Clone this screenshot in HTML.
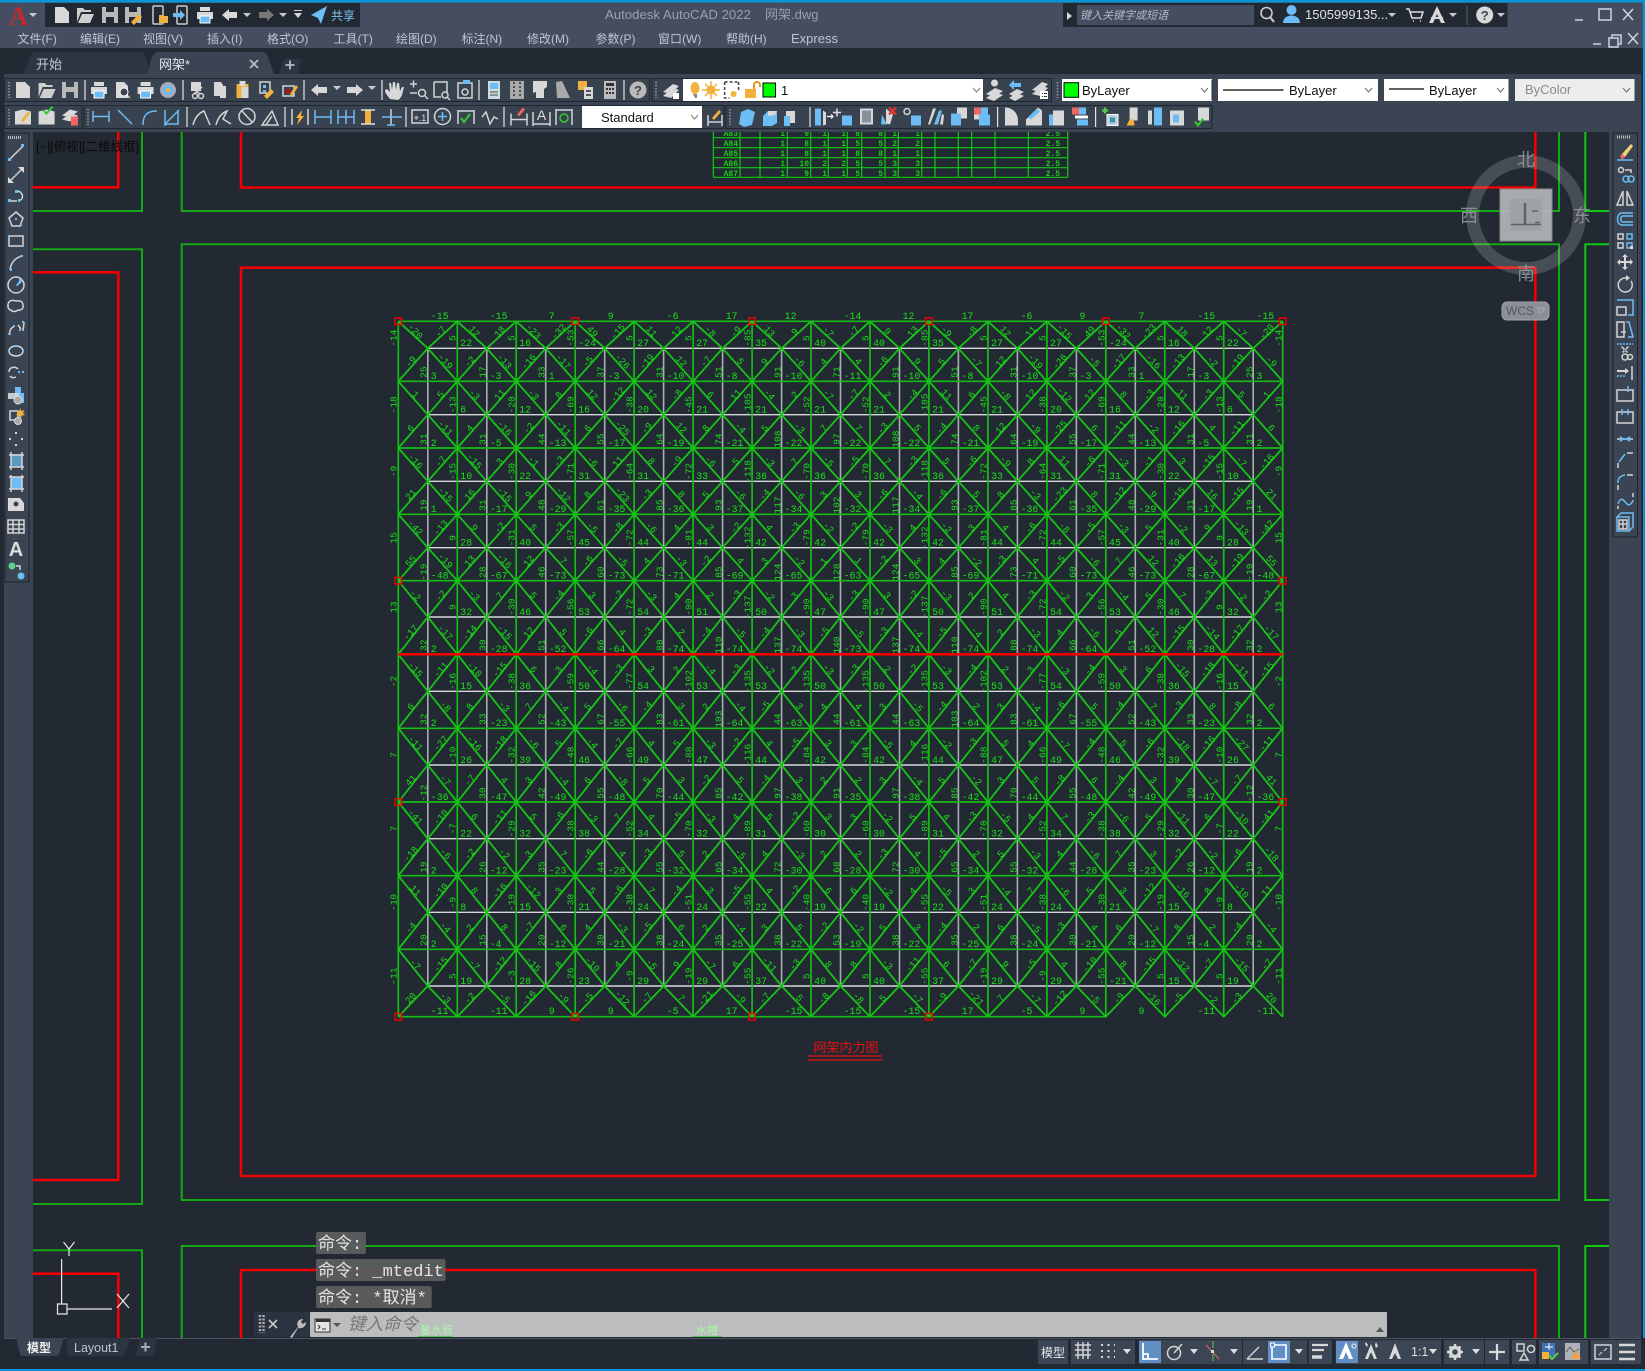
<!DOCTYPE html>
<html lang="zh"><head><meta charset="utf-8"><title>Autodesk AutoCAD 2022 网架.dwg</title>
<style>
html,body{margin:0;padding:0;width:1645px;height:1371px;overflow:hidden;background:#222932}
svg{display:block;font-family:"Liberation Sans","Noto Sans CJK SC",sans-serif}
.m text{font-size:12px;fill:#bfc5cf}
.l text{font:9.5px "Liberation Mono",monospace;fill:#1ae01a;text-anchor:middle;dominant-baseline:central;transform-box:fill-box;transform-origin:center}
.n text:nth-child(odd),.u text:nth-child(even){transform:translate(2px,-3px) rotate(48deg)}
.n text:nth-child(even),.u text:nth-child(odd){transform:translate(-2px,-3px) rotate(-48deg)}
.v text{transform:rotate(-90deg)}
.h text{font:9.83px "Liberation Mono",monospace;fill:#1ae01a;white-space:pre}
.t text{font:bold 8px "Liberation Mono",monospace;fill:#16d016;text-anchor:end}
.s{fill:none;stroke:#d4d4d4;stroke-width:1.5}
.b{fill:none;stroke:#6cbcf5;stroke-width:1.5}
.f{fill:#d8d8d8}
.fb{fill:#6cbcf5}
.o{fill:#f2b13c}
.g{fill:#3c4553}
</style></head><body>
<svg width="1645" height="1371" viewBox="0 0 1645 1371" xmlns="http://www.w3.org/2000/svg">
<defs>
<path id="z" vector-effect="non-scaling-stroke" fill="none" stroke="#16c416" stroke-width="1.8" d="M0 0l29.48 1 29.48-1 29.48 1 29.48-1 29.48 1 29.48-1 29.48 1 29.48-1 29.48 1 29.48-1 29.48 1 29.48-1 29.48 1 29.48-1 29.48 1 29.48-1 29.48 1 29.48-1 29.48 1 29.48-1 29.48 1 29.48-1 29.48 1 29.48-1 29.48 1 29.48-1 29.48 1 29.48-1 29.48 1 29.48-1"/>
<path id="doc" class="f" d="M-7-8h9l5 5v11H-7z"/>
<path id="op" fill="#cfcfcf" d="M-8 7V-7h6l2 2h6v2H-4zM-3-1H9L5 8H-7z"/>
<path id="sv" fill="#b9b9b9" fill-rule="evenodd" d="M-8-8H8V8H-8zM-4-8v5h8v-5zM-4 2v6h8V2z"/>
<g id="pr"><path class="f" d="M-5-8H5v4H-5zM-8-3H8V4H-8z"/><path class="fb" stroke="#fff" d="M-5 1H5v7H-5z"/></g>
<path id="tr" fill="#c8ccd2" d="M-4-2H4L0 2z"/>
</defs>

<!-- canvas -->
<rect width="1645" height="1371" fill="#222932"/>
<g fill="none" stroke="#14a814" stroke-width="2">
<path d="M30 211H142V100M30 249.3H142V1204H30M30 1250.3H142V1340"/>
<path d="M181.7 100V211H1559V100M181.7 1340V1246H1559V1340"/>
<path d="M181.7 1200V244.3H1559V1200z"/>
<path stroke="#10c810" d="M1585.3 100V211H1612M1612 244.3H1585.3V1200H1612M1612 1246H1585.3V1340"/>
</g>
<g fill="none" stroke="#f00000" stroke-width="2.6">
<path d="M30 187.3H118.3V100M30 272.3H118.3V1180H30M30 1273.7H118.3V1340"/>
<path d="M241 100V187.5H1535.3V100M241 267.7H1535.3V1176H241zM241 1340V1270H1535.3V1340"/>
</g>

<!-- table -->
<path fill="none" stroke="#13c813" stroke-width="1.2" d="M713.3 127.7H1067.7M713.3 137.7H1067.7M713.3 147.7H1067.7M713.3 157.7H1067.7M713.3 167.7H1067.7M713.3 177.3H1067.7M713.3 127V177.3M740 127V177.3M760 127V177.3M787.3 127V177.3M810.7 127V177.3M828.3 127V177.3M847.3 127V177.3M861.7 127V177.3M885 127V177.3M898.3 127V177.3M921.7 127V177.3M935 127V177.3M958.3 127V177.3M971.7 127V177.3M995 127V177.3M1028.3 127V177.3M1067.7 127V177.3"/>
<g class="t">
<text x="738" y="136">A83</text><text x="785" y="136">1</text><text x="809" y="136">9</text><text x="827" y="136">1</text><text x="846" y="136">1</text><text x="860" y="136">8</text><text x="883" y="136">8</text><text x="897" y="136">1</text><text x="920" y="136">1</text><text x="1060" y="136">2.5</text>
<text x="738" y="146">A84</text><text x="785" y="146">1</text><text x="809" y="146">8</text><text x="827" y="146">1</text><text x="846" y="146">1</text><text x="860" y="146">5</text><text x="883" y="146">5</text><text x="897" y="146">2</text><text x="920" y="146">2</text><text x="1060" y="146">2.5</text>
<text x="738" y="156">A85</text><text x="785" y="156">1</text><text x="809" y="156">8</text><text x="827" y="156">1</text><text x="846" y="156">1</text><text x="860" y="156">8</text><text x="883" y="156">8</text><text x="897" y="156">1</text><text x="920" y="156">1</text><text x="1060" y="156">2.5</text>
<text x="738" y="166">A86</text><text x="785" y="166">1</text><text x="809" y="166">10</text><text x="827" y="166">2</text><text x="846" y="166">2</text><text x="860" y="166">5</text><text x="883" y="166">5</text><text x="897" y="166">3</text><text x="920" y="166">3</text><text x="1060" y="166">2.5</text>
<text x="738" y="176">A87</text><text x="785" y="176">1</text><text x="809" y="176">9</text><text x="827" y="176">1</text><text x="846" y="176">1</text><text x="860" y="176">5</text><text x="883" y="176">5</text><text x="897" y="176">3</text><text x="920" y="176">3</text><text x="1060" y="176">2.5</text>
</g>

<!-- truss: white members -->
<path fill="none" stroke="#a9adb2" stroke-width="1.6" d="M427.8 348.3V986M486.8 348.3V986M545.7 348.3V986M604.7 348.3V986M663.6 348.3V986M722.6 348.3V986M781.6 348.3V986M840.5 348.3V986M899.5 348.3V986M958.4 348.3V986M1017.4 348.3V986M1076.4 348.3V986M1135.3 348.3V986M1194.3 348.3V986M1253.2 348.3V986"/>
<path fill="none" stroke="#d6d8da" stroke-width="1.4" d="M427.8 348.3H1253.2M427.8 414.7H1253.2M427.8 481.3H1253.2M427.8 547.7H1253.2M427.8 617H1253.2M427.8 691.3H1253.2M427.8 765H1253.2M427.8 838.7H1253.2M427.8 912.3H1253.2M427.8 986H1253.2"/>
<!-- truss: green members -->
<path fill="none" stroke="#14bc14" stroke-width="1.7" d="M398.3 321.3V1016.7M457.3 321.3V1016.7M516.2 321.3V1016.7M575.2 321.3V1016.7M634.1 321.3V1016.7M693.1 321.3V1016.7M752.1 321.3V1016.7M811 321.3V1016.7M870 321.3V1016.7M928.9 321.3V1016.7M987.9 321.3V1016.7M1046.9 321.3V1016.7M1105.8 321.3V1016.7M1164.8 321.3V1016.7M1223.7 321.3V1016.7M1282.7 321.3V1016.7M398.3 321.3H1282.7M398.3 381.3H1282.7M398.3 448H1282.7M398.3 514.3H1282.7M398.3 580.7H1282.7M398.3 728.3H1282.7M398.3 802H1282.7M398.3 875.7H1282.7M398.3 949.3H1282.7M398.3 1016.7H1105.8"/>
<use href="#z" transform="matrix(1 0 0 27 398.3 321.3)"/><use href="#z" transform="matrix(1 0 0 -33 398.3 381.3)"/>
<use href="#z" transform="matrix(1 0 0 33.4 398.3 381.3)"/><use href="#z" transform="matrix(1 0 0 -33.3 398.3 448)"/>
<use href="#z" transform="matrix(1 0 0 33.3 398.3 448)"/><use href="#z" transform="matrix(1 0 0 -33 398.3 514.3)"/>
<use href="#z" transform="matrix(1 0 0 33.4 398.3 514.3)"/><use href="#z" transform="matrix(1 0 0 -33 398.3 580.7)"/>
<use href="#z" transform="matrix(1 0 0 36.3 398.3 580.7)"/><use href="#z" transform="matrix(1 0 0 -37.3 398.3 654.3)"/>
<use href="#z" transform="matrix(1 0 0 37 398.3 654.3)"/><use href="#z" transform="matrix(1 0 0 -37 398.3 728.3)"/>
<use href="#z" transform="matrix(1 0 0 36.7 398.3 728.3)"/><use href="#z" transform="matrix(1 0 0 -37 398.3 802)"/>
<use href="#z" transform="matrix(1 0 0 36.7 398.3 802)"/><use href="#z" transform="matrix(1 0 0 -37 398.3 875.7)"/>
<use href="#z" transform="matrix(1 0 0 36.6 398.3 875.7)"/><use href="#z" transform="matrix(1 0 0 -37 398.3 949.3)"/>
<use href="#z" transform="matrix(1 0 0 36.7 398.3 949.3)"/><use href="#z" transform="matrix(1 0 0 -30.7 398.3 1016.7)"/>
<path stroke="#f00000" stroke-width="2.6" d="M398.3 654.3H1282.7"/>
<g fill="none" stroke="#f00000" stroke-width="1.4"><path d="M395 318h6.6v6.6H395zM571.9 318h6.6v6.6h-6.6zM748.8 318h6.6v6.6h-6.6zM925.6 318h6.6v6.6h-6.6zM1102.5 318h6.6v6.6h-6.6zM1279.4 318h6.6v6.6h-6.6zM395 577.4h6.6v6.6H395zM1279.4 577.4h6.6v6.6h-6.6zM395 798.7h6.6v6.6H395zM1279.4 798.7h6.6v6.6h-6.6zM395 1013.4h6.6v6.6H395zM571.9 1013.4h6.6v6.6h-6.6zM748.8 1013.4h6.6v6.6h-6.6zM925.6 1013.4h6.6v6.6h-6.6z"/></g>

<!-- horizontal member forces -->
<g class="h">
<text x="430.8" y="319">-15       -15       7         9         -6        17        12        -14       12        17        -6        9         7         -15       -15</text>
<text x="460.3" y="346">22        16        -24       27        27        35        40        40        35        27        27        -24       16        22</text>
<text x="430.8" y="379">3         -3        1         -3        -10       -8        -10       -11       -10       -8        -10       -3        1         -3        3</text>
<text x="460.3" y="412.5">6         12        16        20        21        21        21        21        21        21        20        16        12        6</text>
<text x="430.8" y="446">2         -5        -13       -17       -19       -21       -22       -22       -22       -21       -19       -17       -13       -5        2</text>
<text x="460.3" y="479">10        22        31        31        33        36        36        36        36        33        31        31        22        10</text>
<text x="430.8" y="512">1         -17       -29       -35       -36       -37       -34       -32       -34       -37       -36       -35       -29       -17       1</text>
<text x="460.3" y="545.5">28        40        45        44        44        42        42        42        42        44        44        45        40        28</text>
<text x="430.8" y="578.5">-48       -67       -73       -73       -71       -69       -65       -63       -65       -69       -71       -73       -73       -67       -48</text>
<text x="460.3" y="615">32        46        53        54        51        50        47        47        50        51        54        53        46        32</text>
<text x="430.8" y="652">2         -28       -52       -64       -74       -74       -74       -73       -74       -74       -74       -64       -52       -28       2</text>
<text x="460.3" y="689">15        36        50        54        53        53        50        50        53        53        54        50        36        15</text>
<text x="430.8" y="726">2         -23       -43       -55       -61       -64       -63       -61       -63       -64       -61       -55       -43       -23       2</text>
<text x="460.3" y="763">26        39        46        49        47        44        42        42        44        47        49        46        39        26</text>
<text x="430.8" y="800">-36       -47       -49       -48       -44       -42       -38       -35       -38       -42       -44       -48       -49       -47       -36</text>
<text x="460.3" y="836.5">22        32        38        34        32        31        30        30        31        32        34        38        32        22</text>
<text x="430.8" y="873.5">2         -12       -23       -28       -32       -34       -30       -28       -30       -34       -32       -28       -23       -12       2</text>
<text x="460.3" y="910">8         15        21        24        24        22        19        19        22        24        24        21        15        8</text>
<text x="430.8" y="947">2         -4        -12       -21       -24       -25       -22       -19       -22       -25       -24       -21       -12       -4        2</text>
<text x="460.3" y="984">19        28        23        29        29        37        40        40        37        29        29        -21       15        19</text>
<text x="430.8" y="1014">-11       -11       9         9         -5        17        -15       -15       -15       17        -5        9         9         -11       -11</text>
</g>

<!-- vertical member forces -->
<g class="l v">
<g transform="translate(0,338)"><text x=394>-14</text><text x=453>5</text><text x=512>5</text><text x=571>-53</text><text x=630>5</text><text x=689>5</text><text x=748>-85</text><text x=807>5</text><text x=866>5</text><text x=925>-85</text><text x=984>5</text><text x=1043>5</text><text x=1102>-53</text><text x=1161>5</text><text x=1220>5</text><text x=1279>-14</text></g>
<g transform="translate(0,404.7)"><text x=394>-18</text><text x=453>-13</text><text x=512>-20</text><text x=571>-69</text><text x=630>-38</text><text x=689>-45</text><text x=748>-105</text><text x=807>-52</text><text x=866>-52</text><text x=925>-105</text><text x=984>-45</text><text x=1043>-38</text><text x=1102>-69</text><text x=1161>-20</text><text x=1220>-13</text><text x=1279>-18</text></g>
<g transform="translate(0,471.3)"><text x=394>-9</text><text x=453>-15</text><text x=512>-30</text><text x=571>-71</text><text x=630>-64</text><text x=689>-72</text><text x=748>-118</text><text x=807>-70</text><text x=866>-70</text><text x=925>-118</text><text x=984>-72</text><text x=1043>-64</text><text x=1102>-71</text><text x=1161>-30</text><text x=1220>-15</text><text x=1279>-9</text></g>
<g transform="translate(0,537.7)"><text x=394>15</text><text x=453>9</text><text x=512>-31</text><text x=571>-57</text><text x=630>-72</text><text x=689>-81</text><text x=748>-132</text><text x=807>-79</text><text x=866>-79</text><text x=925>-132</text><text x=984>-81</text><text x=1043>-72</text><text x=1102>-57</text><text x=1161>-31</text><text x=1220>9</text><text x=1279>15</text></g>
<g transform="translate(0,607)"><text x=394>13</text><text x=453>9</text><text x=512>-30</text><text x=571>-56</text><text x=630>-72</text><text x=689>-90</text><text x=748>-137</text><text x=807>-90</text><text x=866>-90</text><text x=925>-137</text><text x=984>-90</text><text x=1043>-72</text><text x=1102>-56</text><text x=1161>-30</text><text x=1220>9</text><text x=1279>13</text></g>
<g transform="translate(0,681.3)"><text x=394>-2</text><text x=453>-16</text><text x=512>-38</text><text x=571>-59</text><text x=630>-77</text><text x=689>-102</text><text x=748>-135</text><text x=807>-135</text><text x=866>-135</text><text x=925>-135</text><text x=984>-102</text><text x=1043>-77</text><text x=1102>-59</text><text x=1161>-38</text><text x=1220>-16</text><text x=1279>-2</text></g>
<g transform="translate(0,755)"><text x=394>7</text><text x=453>-10</text><text x=512>-32</text><text x=571>-48</text><text x=630>-66</text><text x=689>-88</text><text x=748>-116</text><text x=807>-84</text><text x=866>-84</text><text x=925>-116</text><text x=984>-88</text><text x=1043>-66</text><text x=1102>-48</text><text x=1161>-32</text><text x=1220>-10</text><text x=1279>7</text></g>
<g transform="translate(0,828.7)"><text x=394>7</text><text x=453>-7</text><text x=512>-29</text><text x=571>-38</text><text x=630>-52</text><text x=689>-70</text><text x=748>-89</text><text x=807>-60</text><text x=866>-60</text><text x=925>-89</text><text x=984>-70</text><text x=1043>-52</text><text x=1102>-38</text><text x=1161>-29</text><text x=1220>-7</text><text x=1279>7</text></g>
<g transform="translate(0,902.3)"><text x=394>-10</text><text x=453>-9</text><text x=512>-19</text><text x=571>-30</text><text x=630>-38</text><text x=689>-51</text><text x=748>-55</text><text x=807>-40</text><text x=866>-40</text><text x=925>-55</text><text x=984>-51</text><text x=1043>-38</text><text x=1102>-30</text><text x=1161>-19</text><text x=1220>-9</text><text x=1279>-10</text></g>
<g transform="translate(0,976)"><text x=394>-11</text><text x=453>5</text><text x=512>-3</text><text x=571>-26</text><text x=630>-9</text><text x=689>-19</text><text x=748>-55</text><text x=807>5</text><text x=866>5</text><text x=925>-55</text><text x=984>-19</text><text x=1043>-9</text><text x=1102>-55</text><text x=1161>5</text><text x=1220>5</text><text x=1279>-11</text></g>
<g transform="translate(0,372)"><text x=424>25</text><text x=483>17</text><text x=542>33</text><text x=601>37</text><text x=660>31</text><text x=719>51</text><text x=778>91</text><text x=837>71</text><text x=896>91</text><text x=955>51</text><text x=1014>31</text><text x=1073>37</text><text x=1132>33</text><text x=1191>17</text><text x=1250>25</text></g>
<g transform="translate(0,439)"><text x=424>31</text><text x=483>31</text><text x=542>44</text><text x=601>55</text><text x=660>64</text><text x=719>74</text><text x=778>108</text><text x=837>97</text><text x=896>108</text><text x=955>74</text><text x=1014>64</text><text x=1073>55</text><text x=1132>44</text><text x=1191>31</text><text x=1250>31</text></g>
<g transform="translate(0,505)"><text x=424>19</text><text x=483>31</text><text x=542>48</text><text x=601>61</text><text x=660>85</text><text x=719>93</text><text x=778>117</text><text x=837>102</text><text x=896>117</text><text x=955>93</text><text x=1014>85</text><text x=1073>61</text><text x=1132>48</text><text x=1191>31</text><text x=1250>19</text></g>
<g transform="translate(0,572)"><text x=424>-19</text><text x=483>28</text><text x=542>46</text><text x=601>60</text><text x=660>73</text><text x=719>85</text><text x=778>124</text><text x=837>128</text><text x=896>124</text><text x=955>85</text><text x=1014>73</text><text x=1073>60</text><text x=1132>46</text><text x=1191>28</text><text x=1250>-19</text></g>
<g transform="translate(0,645)"><text x=424>32</text><text x=483>30</text><text x=542>51</text><text x=601>66</text><text x=660>88</text><text x=719>110</text><text x=778>137</text><text x=837>140</text><text x=896>137</text><text x=955>110</text><text x=1014>88</text><text x=1073>66</text><text x=1132>51</text><text x=1191>30</text><text x=1250>32</text></g>
<g transform="translate(0,719)"><text x=424>32</text><text x=483>33</text><text x=542>52</text><text x=601>67</text><text x=660>83</text><text x=719>103</text><text x=778>44</text><text x=837>44</text><text x=896>44</text><text x=955>103</text><text x=1014>83</text><text x=1073>67</text><text x=1132>52</text><text x=1191>33</text><text x=1250>32</text></g>
<g transform="translate(0,793)"><text x=424>-12</text><text x=483>30</text><text x=542>42</text><text x=601>55</text><text x=660>70</text><text x=719>85</text><text x=778>97</text><text x=837>91</text><text x=896>97</text><text x=955>85</text><text x=1014>70</text><text x=1073>55</text><text x=1132>42</text><text x=1191>30</text><text x=1250>-12</text></g>
<g transform="translate(0,867)"><text x=424>19</text><text x=483>26</text><text x=542>35</text><text x=601>44</text><text x=660>55</text><text x=719>65</text><text x=778>72</text><text x=837>68</text><text x=896>72</text><text x=955>65</text><text x=1014>55</text><text x=1073>44</text><text x=1132>35</text><text x=1191>26</text><text x=1250>19</text></g>
<g transform="translate(0,940)"><text x=424>20</text><text x=483>15</text><text x=542>20</text><text x=601>30</text><text x=660>38</text><text x=719>35</text><text x=778>38</text><text x=837>53</text><text x=896>38</text><text x=955>35</text><text x=1014>38</text><text x=1073>30</text><text x=1132>20</text><text x=1191>15</text><text x=1250>20</text></g>
</g>

<!-- diagonal member forces -->
<g class="l n" transform="translate(0,334.8)"><text x=413>-20</text><text x=443>-7</text><text x=472>12</text><text x=502>18</text><text x=531>-23</text><text x=561>-32</text><text x=590>49</text><text x=620>-15</text><text x=649>11</text><text x=679>12</text><text x=708>-8</text><text x=738>-9</text><text x=767>13</text><text x=797>9</text><text x=826>-7</text><text x=856>-7</text><text x=885>9</text><text x=915>13</text><text x=944>-9</text><text x=974>-8</text><text x=1003>12</text><text x=1033>11</text><text x=1062>-15</text><text x=1092>49</text><text x=1121>-32</text><text x=1151>-23</text><text x=1180>18</text><text x=1210>12</text><text x=1239>-7</text><text x=1269>-20</text></g>
<g class="l u" transform="translate(0,364.8)"><text x=413>-9</text><text x=443>-19</text><text x=472>-2</text><text x=502>-13</text><text x=531>-16</text><text x=561>-17</text><text x=590>-5</text><text x=620>-26</text><text x=649>-19</text><text x=679>12</text><text x=708>-7</text><text x=738>5</text><text x=767>9</text><text x=797>-6</text><text x=826>4</text><text x=856>4</text><text x=885>-6</text><text x=915>9</text><text x=944>5</text><text x=974>-7</text><text x=1003>12</text><text x=1033>-19</text><text x=1062>-26</text><text x=1092>-5</text><text x=1121>-17</text><text x=1151>-16</text><text x=1180>-13</text><text x=1210>-2</text><text x=1239>-19</text><text x=1269>-9</text></g>
<g class="l n" transform="translate(0,398)"><text x=413>1</text><text x=443>5</text><text x=472>-3</text><text x=502>11</text><text x=531>-3</text><text x=561>8</text><text x=590>12</text><text x=620>-12</text><text x=649>12</text><text x=679>-8</text><text x=708>6</text><text x=738>11</text><text x=767>-4</text><text x=797>2</text><text x=826>-7</text><text x=856>-7</text><text x=885>2</text><text x=915>-4</text><text x=944>11</text><text x=974>6</text><text x=1003>-8</text><text x=1033>12</text><text x=1062>-12</text><text x=1092>12</text><text x=1121>8</text><text x=1151>-3</text><text x=1180>11</text><text x=1210>-3</text><text x=1239>5</text><text x=1269>1</text></g>
<g class="l u" transform="translate(0,431.3)"><text x=413>6</text><text x=443>-11</text><text x=472>4</text><text x=502>-16</text><text x=531>-2</text><text x=561>-11</text><text x=590>6</text><text x=620>-25</text><text x=649>-9</text><text x=679>12</text><text x=708>8</text><text x=738>-4</text><text x=767>5</text><text x=797>-3</text><text x=826>7</text><text x=856>7</text><text x=885>-3</text><text x=915>5</text><text x=944>-4</text><text x=974>8</text><text x=1003>12</text><text x=1033>-9</text><text x=1062>-25</text><text x=1092>6</text><text x=1121>-11</text><text x=1151>-2</text><text x=1180>-16</text><text x=1210>4</text><text x=1239>-11</text><text x=1269>6</text></g>
<g class="l n" transform="translate(0,464.7)"><text x=413>-16</text><text x=443>-7</text><text x=472>-15</text><text x=502>3</text><text x=531>-1</text><text x=561>-3</text><text x=590>-6</text><text x=620>11</text><text x=649>8</text><text x=679>-9</text><text x=708>-6</text><text x=738>5</text><text x=767>-3</text><text x=797>7</text><text x=826>-5</text><text x=856>-5</text><text x=885>7</text><text x=915>-3</text><text x=944>5</text><text x=974>-6</text><text x=1003>-9</text><text x=1033>8</text><text x=1062>11</text><text x=1092>-6</text><text x=1121>-3</text><text x=1151>-1</text><text x=1180>3</text><text x=1210>-15</text><text x=1239>-7</text><text x=1269>-16</text></g>
<g class="l u" transform="translate(0,497.8)"><text x=413>21</text><text x=443>-15</text><text x=472>16</text><text x=502>-15</text><text x=531>9</text><text x=561>-12</text><text x=590>8</text><text x=620>-23</text><text x=649>-3</text><text x=679>8</text><text x=708>5</text><text x=738>-6</text><text x=767>-4</text><text x=797>-6</text><text x=826>3</text><text x=856>3</text><text x=885>-6</text><text x=915>-4</text><text x=944>-6</text><text x=974>5</text><text x=1003>8</text><text x=1033>-3</text><text x=1062>-23</text><text x=1092>8</text><text x=1121>-12</text><text x=1151>9</text><text x=1180>-15</text><text x=1210>16</text><text x=1239>-15</text><text x=1269>21</text></g>
<g class="l n" transform="translate(0,531)"><text x=413>-42</text><text x=443>-13</text><text x=472>9</text><text x=502>-2</text><text x=531>5</text><text x=561>-3</text><text x=590>-5</text><text x=620>-8</text><text x=649>-6</text><text x=679>4</text><text x=708>3</text><text x=738>-2</text><text x=767>4</text><text x=797>-3</text><text x=826>-2</text><text x=856>-2</text><text x=885>-3</text><text x=915>4</text><text x=944>-2</text><text x=974>3</text><text x=1003>4</text><text x=1033>-6</text><text x=1062>-8</text><text x=1092>-5</text><text x=1121>-3</text><text x=1151>5</text><text x=1180>-2</text><text x=1210>9</text><text x=1239>-13</text><text x=1269>-42</text></g>
<g class="l u" transform="translate(0,564.2)"><text x=413>55</text><text x=443>-19</text><text x=472>13</text><text x=502>-16</text><text x=531>12</text><text x=561>7</text><text x=590>-6</text><text x=620>-5</text><text x=649>4</text><text x=679>-3</text><text x=708>-2</text><text x=738>4</text><text x=767>3</text><text x=797>-2</text><text x=826>1</text><text x=856>1</text><text x=885>-2</text><text x=915>3</text><text x=944>4</text><text x=974>-2</text><text x=1003>-3</text><text x=1033>4</text><text x=1062>-5</text><text x=1092>-6</text><text x=1121>7</text><text x=1151>12</text><text x=1180>-16</text><text x=1210>13</text><text x=1239>-19</text><text x=1269>55</text></g>
<g class="l n" transform="translate(0,598.8)"><text x=413>-2</text><text x=443>-2</text><text x=472>-3</text><text x=502>7</text><text x=531>5</text><text x=561>-4</text><text x=590>3</text><text x=620>-2</text><text x=649>-3</text><text x=679>4</text><text x=708>2</text><text x=738>-3</text><text x=767>-2</text><text x=797>3</text><text x=826>-3</text><text x=856>-3</text><text x=885>3</text><text x=915>-2</text><text x=944>-3</text><text x=974>2</text><text x=1003>4</text><text x=1033>-3</text><text x=1062>-2</text><text x=1092>3</text><text x=1121>-4</text><text x=1151>5</text><text x=1180>7</text><text x=1210>-3</text><text x=1239>-2</text><text x=1269>-2</text></g>
<g class="l u" transform="translate(0,635.7)"><text x=413>-17</text><text x=443>-17</text><text x=472>-14</text><text x=502>-15</text><text x=531>12</text><text x=561>5</text><text x=590>-6</text><text x=620>4</text><text x=649>-3</text><text x=679>2</text><text x=708>-4</text><text x=738>-5</text><text x=767>-4</text><text x=797>-3</text><text x=826>-5</text><text x=856>-5</text><text x=885>-3</text><text x=915>-4</text><text x=944>-5</text><text x=974>-4</text><text x=1003>2</text><text x=1033>-3</text><text x=1062>4</text><text x=1092>-6</text><text x=1121>5</text><text x=1151>12</text><text x=1180>-15</text><text x=1210>-14</text><text x=1239>-17</text><text x=1269>-17</text></g>
<g class="l n" transform="translate(0,672.8)"><text x=413>-15</text><text x=443>-11</text><text x=472>-18</text><text x=502>-15</text><text x=531>6</text><text x=561>3</text><text x=590>-4</text><text x=620>-3</text><text x=649>3</text><text x=679>2</text><text x=708>-4</text><text x=738>-3</text><text x=767>-2</text><text x=797>2</text><text x=826>-3</text><text x=856>-3</text><text x=885>2</text><text x=915>-2</text><text x=944>-3</text><text x=974>-4</text><text x=1003>2</text><text x=1033>3</text><text x=1062>-3</text><text x=1092>-4</text><text x=1121>3</text><text x=1151>6</text><text x=1180>-15</text><text x=1210>-18</text><text x=1239>-11</text><text x=1269>-15</text></g>
<g class="l u" transform="translate(0,709.8)"><text x=413>6</text><text x=443>-8</text><text x=472>8</text><text x=502>-3</text><text x=531>7</text><text x=561>-4</text><text x=590>5</text><text x=620>-6</text><text x=649>-4</text><text x=679>3</text><text x=708>2</text><text x=738>-4</text><text x=767>-5</text><text x=797>3</text><text x=826>4</text><text x=856>4</text><text x=885>3</text><text x=915>-5</text><text x=944>-4</text><text x=974>2</text><text x=1003>3</text><text x=1033>-4</text><text x=1062>-6</text><text x=1092>5</text><text x=1121>-4</text><text x=1151>7</text><text x=1180>-3</text><text x=1210>8</text><text x=1239>-8</text><text x=1269>6</text></g>
<g class="l n" transform="translate(0,746.7)"><text x=413>-11</text><text x=443>-27</text><text x=472>-16</text><text x=502>-18</text><text x=531>-6</text><text x=561>5</text><text x=590>-4</text><text x=620>-7</text><text x=649>4</text><text x=679>5</text><text x=708>-3</text><text x=738>-2</text><text x=767>4</text><text x=797>-5</text><text x=826>3</text><text x=856>3</text><text x=885>-5</text><text x=915>4</text><text x=944>-2</text><text x=974>-3</text><text x=1003>5</text><text x=1033>4</text><text x=1062>-7</text><text x=1092>-4</text><text x=1121>5</text><text x=1151>-6</text><text x=1180>-18</text><text x=1210>-16</text><text x=1239>-27</text><text x=1269>-11</text></g>
<g class="l u" transform="translate(0,783.5)"><text x=413>41</text><text x=443>-7</text><text x=472>-7</text><text x=502>4</text><text x=531>3</text><text x=561>-4</text><text x=590>6</text><text x=620>-8</text><text x=649>5</text><text x=679>3</text><text x=708>-2</text><text x=738>5</text><text x=767>-4</text><text x=797>3</text><text x=826>2</text><text x=856>2</text><text x=885>3</text><text x=915>-4</text><text x=944>5</text><text x=974>-2</text><text x=1003>3</text><text x=1033>5</text><text x=1062>-8</text><text x=1092>6</text><text x=1121>-4</text><text x=1151>3</text><text x=1180>4</text><text x=1210>-7</text><text x=1239>-7</text><text x=1269>41</text></g>
<g class="l n" transform="translate(0,820.3)"><text x=413>-41</text><text x=443>-10</text><text x=472>6</text><text x=502>-11</text><text x=531>5</text><text x=561>-6</text><text x=590>-3</text><text x=620>7</text><text x=649>4</text><text x=679>-5</text><text x=708>-3</text><text x=738>4</text><text x=767>5</text><text x=797>-2</text><text x=826>3</text><text x=856>3</text><text x=885>-2</text><text x=915>5</text><text x=944>4</text><text x=974>-3</text><text x=1003>-5</text><text x=1033>4</text><text x=1062>7</text><text x=1092>-3</text><text x=1121>-6</text><text x=1151>5</text><text x=1180>-11</text><text x=1210>6</text><text x=1239>-10</text><text x=1269>-41</text></g>
<g class="l u" transform="translate(0,857.2)"><text x=413>-18</text><text x=443>-6</text><text x=472>-2</text><text x=502>-2</text><text x=531>3</text><text x=561>7</text><text x=590>-6</text><text x=620>4</text><text x=649>-3</text><text x=679>5</text><text x=708>2</text><text x=738>-5</text><text x=767>4</text><text x=797>-3</text><text x=826>2</text><text x=856>2</text><text x=885>-3</text><text x=915>4</text><text x=944>-5</text><text x=974>2</text><text x=1003>5</text><text x=1033>-3</text><text x=1062>4</text><text x=1092>-6</text><text x=1121>7</text><text x=1151>3</text><text x=1180>-2</text><text x=1210>-2</text><text x=1239>-6</text><text x=1269>-18</text></g>
<g class="l n" transform="translate(0,894)"><text x=413>11</text><text x=443>-10</text><text x=472>8</text><text x=502>-16</text><text x=531>-12</text><text x=561>3</text><text x=590>5</text><text x=620>-6</text><text x=649>7</text><text x=679>-4</text><text x=708>3</text><text x=738>-5</text><text x=767>4</text><text x=797>-2</text><text x=826>6</text><text x=856>6</text><text x=885>-2</text><text x=915>4</text><text x=944>-5</text><text x=974>3</text><text x=1003>-4</text><text x=1033>7</text><text x=1062>-6</text><text x=1092>5</text><text x=1121>3</text><text x=1151>-12</text><text x=1180>-16</text><text x=1210>8</text><text x=1239>-10</text><text x=1269>11</text></g>
<g class="l u" transform="translate(0,930.8)"><text x=413>-4</text><text x=443>-4</text><text x=472>2</text><text x=502>8</text><text x=531>-7</text><text x=561>6</text><text x=590>4</text><text x=620>-3</text><text x=649>-5</text><text x=679>6</text><text x=708>2</text><text x=738>-4</text><text x=767>3</text><text x=797>5</text><text x=826>-2</text><text x=856>-2</text><text x=885>5</text><text x=915>3</text><text x=944>-4</text><text x=974>2</text><text x=1003>6</text><text x=1033>-5</text><text x=1062>-3</text><text x=1092>4</text><text x=1121>6</text><text x=1151>-7</text><text x=1180>8</text><text x=1210>2</text><text x=1239>-4</text><text x=1269>-4</text></g>
<g class="l n" transform="translate(0,967.7)"><text x=413>-7</text><text x=443>-15</text><text x=472>-7</text><text x=502>-12</text><text x=531>-15</text><text x=561>8</text><text x=590>-10</text><text x=620>4</text><text x=649>-5</text><text x=679>9</text><text x=708>-7</text><text x=738>6</text><text x=767>-11</text><text x=797>-3</text><text x=826>8</text><text x=856>8</text><text x=885>-3</text><text x=915>-11</text><text x=944>6</text><text x=974>-7</text><text x=1003>9</text><text x=1033>-5</text><text x=1062>4</text><text x=1092>-10</text><text x=1121>8</text><text x=1151>-15</text><text x=1180>-12</text><text x=1210>-7</text><text x=1239>-15</text><text x=1269>-7</text></g>
<g class="l u" transform="translate(0,1001.3)"><text x=413>20</text><text x=443>-3</text><text x=472>-2</text><text x=502>-5</text><text x=531>-16</text><text x=561>-9</text><text x=590>-5</text><text x=620>-12</text><text x=649>-7</text><text x=679>7</text><text x=708>-21</text><text x=738>-9</text><text x=767>-7</text><text x=797>5</text><text x=826>-8</text><text x=856>-8</text><text x=885>5</text><text x=915>-7</text><text x=944>-9</text><text x=974>-21</text><text x=1003>7</text><text x=1033>-7</text><text x=1062>-12</text><text x=1092>-5</text><text x=1121>-9</text><text x=1151>-16</text><text x=1180>-5</text><text x=1210>-2</text><text x=1239>-3</text><text x=1269>20</text></g>

<text x="846" y="1052" text-anchor="middle" font-size="13" fill="#e81010">网架内力图</text>
<path stroke="#e81010" stroke-width="1.2" d="M808 1056H882M808 1060H882"/>

<text x="36" y="151" font-size="12.5" fill="#0a0a0a">[−][俯视][二维线框]</text>

<!-- view cube -->
<circle cx="1526" cy="215" r="53.5" fill="none" stroke="#fff" stroke-opacity=".17" stroke-width="13"/>
<rect x="1500" y="189" width="52" height="52" fill="#b4b6b8" fill-opacity=".92" stroke="#8a8d90"/>
<rect x="1510" y="199" width="32" height="32" fill="#9da3a6"/>
<path fill="none" stroke="#5e6264" stroke-width="2.4" d="M1525 203V224"/>
<path fill="none" stroke="#5e6264" stroke-width="1.4" d="M1511 224.500H1541M1532 211h6M1535 222.500h5"/>
<g font-size="18" fill="#8a8f94" text-anchor="middle"><text x="1526" y="166">北</text><text x="1526" y="280">南</text><text x="1469" y="222">西</text><text x="1582" y="222">东</text></g>
<rect x="1502" y="302" width="47" height="18" rx="5" fill="#8b8e99" stroke="#a0a3ac"/>
<text x="1506" y="315" font-size="12" fill="#555a60">WCS</text>
<path fill="none" stroke="#aaa" d="M1537 308h8l-4 5z"/>

<!-- UCS -->
<g fill="none" stroke="#e8e8e8" stroke-width="1.2"><path d="M61.6 1259V1304M67 1309H112M57.5 1304h9.5v10h-9.5zM63.5 1242l5.5 7 5.500-7M69 1249v7M117 1294l12 14M129 1294l-12 14"/></g>

<!-- chrome -->
<rect x="0" y="0" width="1645" height="74" fill="#222932"/>
<rect x="0" y="2" width="1645" height="46" fill="#454e60"/>
<rect x="0" y="0" width="1645" height="2.5" fill="#0696d7"/>
<rect x="0" y="74" width="1645" height="58" fill="#3b4452"/>
<rect x="0" y="74" width="4" height="1297" fill="#222932"/>
<rect x="4" y="132" width="29" height="1206" fill="#3b4452"/>
<rect x="1609" y="132" width="32" height="1206" fill="#3b4452"/>
<rect x="1641" y="74" width="4" height="1297" fill="#222932"/>
<rect x="1643" y="0" width="2" height="1371" fill="#0696d7"/>
<rect x="0" y="1338" width="1645" height="33" fill="#222932"/>
<rect x="4" y="1338" width="1637" height="1" fill="#4d5563"/>
<rect x="0" y="1369" width="1645" height="2" fill="#0696d7"/>

<!-- title bar -->
<text x="9" y="25" font-size="26" font-weight="bold" fill="#c12a2a" font-family="Liberation Serif">A</text>
<use href="#tr" x="33" y="15"/>
<rect x="45" y="3" width="315" height="24" fill="#222932"/>
<use href="#doc" x="62" y="15"/><use href="#op" x="85" y="15"/><use href="#sv" x="110" y="15"/><use href="#sv" x="133" y="15"/><path class="o" d="M131 22l8-8 3 3-8 8z"/>
<g transform="translate(158,15)"><rect x="-5" y="-9" width="10" height="18" rx="1" fill="none" stroke="#ccc" stroke-width="1.5"/><path class="o" d="M1 0h4l1 1h4v7H1z"/></g>
<g transform="translate(182,15)"><rect x="-5" y="-9" width="10" height="18" rx="1" fill="none" stroke="#ccc" stroke-width="1.5"/><path class="fb" d="M-9-2h7v-3l5 5-5 5V2h-7z"/></g>
<use href="#pr" x="205" y="15"/>
<path class="f" d="M222 15l7-6v3h8v6h-8v3z"/><use href="#tr" x="247" y="15"/>
<path fill="#777" d="M274 15l-7-6v3h-8v6h8v3z"/><use href="#tr" x="283" y="15"/>
<path class="f" d="M294 10h8v1h-8zM294 13h8l-4 5z"/>
<path class="fb" d="M311 15l16-9-6 18-3-6z"/>
<text x="331" y="20" font-size="12" fill="#7cc3f5">共享</text>
<text x="605" y="19" font-size="13.2" fill="#98a0ac">Autodesk AutoCAD 2022</text>
<text x="765" y="19" font-size="13" fill="#98a0ac">网架.dwg</text>
<rect x="1063" y="3" width="444.500" height="24" fill="#222932"/>
<path class="f" d="M1067 12l5 4-5 4z"/>
<rect x="1077" y="5" width="177" height="20" fill="#454e60"/>
<text x="1080" y="19" font-size="11" font-style="italic" fill="#b3b8c0">键入关键字或短语</text>
<circle cx="1266.500" cy="13" r="5.500" fill="none" stroke="#ccc" stroke-width="1.6"/><path stroke="#ccc" stroke-width="2" d="M1270 17l4 5"/>
<circle cx="1291.500" cy="10" r="5" class="fb"/><path class="fb" d="M1283 23c0-10 17-10 17 0z"/>
<text x="1305" y="19" font-size="13" fill="#dfe2e6">1505999135...</text><use href="#tr" x="1392" y="15"/>
<path fill="none" stroke="#ddd" stroke-width="1.5" d="M1406 9h3l3 9h9l2-6h-13M1413 21h1M1420 21h1"/>
<path class="f" d="M1437 6l8 17h-4l-4-9-4 9h-4zM1431 17h12v2h-12z"/><use href="#tr" x="1453" y="15"/>
<path stroke="#5a6270" d="M1467 6V25"/>
<circle cx="1484.700" cy="15" r="8.500" class="f"/><text x="1484.700" y="20" font-size="13" font-weight="bold" text-anchor="middle" fill="#3c4553">?</text><use href="#tr" x="1501" y="15"/>
<g fill="none" stroke="#d0d4da" stroke-width="1.5"><path d="M1575 20h8M1599 9h12v11h-12zM1623 9l10 11M1633 9l-10 11M1593 44h8M1609 38h9v9h-9zM1612 38v-3h9v9h-3M1628 33l10 11M1638 33l-10 11"/></g>

<g class="m">
<text x="17.500" y="43">文件(F)</text><text x="80" y="43">编辑(E)</text><text x="143" y="43">视图(V)</text><text x="207" y="43">插入(I)</text><text x="267" y="43">格式(O)</text><text x="333.500" y="43">工具(T)</text><text x="396" y="43">绘图(D)</text><text x="461.500" y="43">标注(N)</text><text x="527" y="43">修改(M)</text><text x="595.500" y="43">参数(P)</text><text x="658" y="43">窗口(W)</text><text x="726" y="43">帮助(H)</text><text x="791" y="43" style="font-size:13px">Express</text>
</g>

<!-- tabs -->
<path fill="#2d3542" d="M22 74c6-2 6-22 14-22H140c4 0 5 2 6 6l4 16z"/>
<path fill="#3b4452" d="M146 74c4-2 4-22 12-22H262c5 0 6 4 7 8l5 14z"/>
<path fill="#2d3542" d="M279 74c3-2 2-15 7-15H301l-3 15z"/>
<text x="36" y="69" font-size="13" fill="#c5c9d0">开始</text>
<text x="159" y="69" font-size="13" fill="#e3e5e8">网架*</text>
<path stroke="#b8bcc3" stroke-width="1.8" d="M250 60l8 8M258 60l-8 8M285.500 65h9M290 60.500v9"/>

<!-- toolbars row 1 -->
<g fill="none" stroke="#1e252e" stroke-width="1"><path fill="#39424f" d="M4.500 78.500H649.500V101.500H4.500zM652 78.500H1051.500V101.500H652zM4.500 105.500H82V128.500H4.500zM84 105.500H724V128.500H84zM726 105.500H1212V128.500H726z"/></g>
<path fill="none" stroke="#99a" stroke-width="1.500" stroke-dasharray="1.500 1.500" d="M9 82V98M656 82V98M1057.500 82V98M9 109V125M88 109V125M730 109V125"/>
<path stroke="#e4e4e4" stroke-width="1.200" d="M85 80V100M183 80V100M304 80V100M382 80V100M479 80V100M624 80V100M187 107V127M285 107V127M406 107V127M504 107V127M810 107V127M997.600 107V127M1095.600 107V127"/>
<use href="#doc" x="23" y="90"/><use href="#op" x="46.600" y="90"/><use href="#sv" x="70" y="90"/>
<use href="#pr" x="99" y="90"/><g transform="translate(122,90)"><path class="f" d="M-6-8h8l4 4V8H-6z"/><circle cx="2" cy="2" r="4" fill="#3b4452" stroke="#fff"/><path stroke="#fff" d="M5 5l3 3"/></g>
<use href="#pr" x="145.600" y="90"/><g transform="translate(168,90)"><circle r="8" fill="#aab" /><circle r="5" fill="#6cbcf5"/><circle r="2" fill="#f2b13c"/></g>
<g transform="translate(197,90)"><path class="f" d="M-6-8h10v9H-6z"/><circle cx="-2" cy="6" r="2.500" class="s"/><circle cx="4" cy="6" r="2.500" class="s"/><path class="s" d="M-5-3l8 7M5-3l-8 7"/></g>
<g transform="translate(220,90)"><path class="f" d="M-6-8h7l2 3V6H-6zM0-4h6V8H0z"/></g>
<g transform="translate(242.500,90)"><path class="o" d="M-6-6H6V8H-6z"/><path class="f" d="M-3-9h6v5h-6zM-1-3h7V8h-7z"/></g>
<g transform="translate(266,90)"><path class="s" d="M-6-8H4V3H-6z"/><path class="fb" d="M-3-5h3v3h-3zM-3 0h3v2h-3z"/><path class="o" d="M-2 6l7-7 3 3-7 7z"/></g>
<g transform="translate(290,90)"><path class="s" d="M-7-4H4V6H-7z"/><circle cx="-2" cy="1" r="2" fill="#d00"/><path class="o" d="M0 4l6-9 2 2-6 9z"/></g>
<path class="f" d="M311 90l7-6v3h9v6h-9v3z"/><use href="#tr" x="337" y="88"/><path class="f" d="M363 90l-7-6v3h-9v6h9v3z"/><use href="#tr" x="372" y="88"/>
<path class="f" d="M390 99c-3-4-5-6-5-9l2-1 3 3-1-9h2l1 7 1-8h2l1 8 1-7h2l1 8 2-4h2l-2 8c-1 2-2 4-4 5z"/>
<g class="s"><path d="M410 84h7M413.500 80.500v7M410 93h7"/><circle cx="422" cy="93" r="3.500"/><path d="M425 96l3 3"/></g>
<g class="s"><path d="M434 82h13V93M434 82v15h7"/><circle cx="445" cy="95" r="3"/><path d="M447 97l3 3"/></g>
<g class="s"><path d="M458 83h14v15h-14z"/><circle cx="465" cy="92" r="3"/></g><path class="fb" d="M463 80h7v4h-7z"/>
<g transform="translate(494,90)"><rect x="-6" y="-9" width="12" height="18" fill="#cdd"/><rect x="-4" y="-7" width="8" height="6" class="fb"/><path stroke="#444" d="M-4 2h8M-4 5h8"/></g>
<g transform="translate(517,90)"><rect x="-7" y="-9" width="14" height="18" fill="#aaa"/><path stroke="#333" stroke-width="1.500" stroke-dasharray="2 2" d="M-3-8V8M3-8V8"/></g>
<path class="f" d="M533 81h14v6l-3 2v9h-8v-6l-3 1z"/>
<path fill="#aaa" d="M556 82l6-1 8 17h-13z"/>
<path class="o" d="M578 81h9v9h-9z"/><path class="f" d="M584 87h9v12h-9z"/><path fill="#555" d="M586 90h5v2h-5zM586 94h5v2h-5z"/>
<g transform="translate(610,90)"><rect x="-6" y="-9" width="12" height="18" fill="#bbb"/><path fill="#333" d="M-4-7h8v3h-8zM-4-2h2v2h-2zM-1-2h2v2h-2zM2-2h2v2h-2zM-4 2h2v2h-2zM-1 2h2v2h-2zM2 2h2v2h-2z"/></g>
<circle cx="638" cy="90" r="8.500" fill="#b9b9b9"/><text x="638" y="95" font-size="13" font-weight="bold" text-anchor="middle" fill="#3c4553">?</text>
<g transform="translate(671,90)"><path class="f" d="M-8 2l10-8 6 2-8 8zM-8 6l10-8 6 2-8 8z"/><rect x="2" y="3" width="6" height="6" fill="#fff"/></g>
<!-- layer combo -->
<rect x="683" y="79" width="300" height="22" fill="#fff"/>
<g transform="translate(695,90)"><ellipse cy="-2" rx="4.500" ry="6" class="o"/><path fill="#888" d="M-2 4h4v4h-2z"/></g>
<circle cx="711" cy="90" r="4.500" class="o"/><path stroke="#f2b13c" stroke-width="1.500" d="M711 81v18M702 90h18M705 84l12 12M717 84l-12 12"/>
<g transform="translate(731.600,90)"><path fill="none" stroke="#444" stroke-dasharray="3 2" stroke-width="1.500" d="M-7-8H7M-7-8V8H-2M7-8V1"/><circle cx="2" cy="4" r="3" class="o"/></g>
<g transform="translate(751,90)"><rect x="-6" y="-1" width="11" height="9" class="o"/><path fill="none" stroke="#e09a20" stroke-width="2" d="M3-1V-5c0-4 6-4 6 0v2"/></g>
<rect x="763" y="83" width="12.500" height="14" fill="#0f0" stroke="#000"/>
<text x="781" y="95" font-size="13" fill="#111">1</text>
<path fill="none" stroke="#888" stroke-width="1.200" d="M973 88l3.500 4 3.500-4"/>
<g class="f"><path d="M986 94l9-6 8 3-9 6zM986 98l9-6 8 3-9 6zM991 83a3.500 3.500 0 1 0 7 0 3.500 3.500 0 0 0-7 0z"/></g>
<g transform="translate(1016,90)"><path class="fb" d="M-7-5l5-5v3H5v4H-2v3z"/><path class="f" d="M-7 4l8-5 7 3-9 5zM-7 8l8-5 7 3-9 5z"/></g>
<g transform="translate(1040,90)"><path class="f" d="M-8 0l10-8 6 2-8 8zM-8 4l10-8 6 2-8 8z"/><rect x="0" y="1" width="8" height="8" fill="#fff"/><path fill="#333" d="M2 3h1v1H2zM4 3h3v1H4zM2 6h1v1H2zM4 6h3v1H4z"/></g>
<!-- property combos -->
<rect x="1062" y="79" width="150" height="22" fill="#fff"/><rect x="1064" y="82.700" width="14.600" height="14.600" fill="#0f0" stroke="#000"/>
<text x="1082" y="95" font-size="13" fill="#111">ByLayer</text>
<path stroke="#333" d="M1212 80V100"/>
<rect x="1218" y="79" width="160" height="22" fill="#fff"/><path stroke="#000" stroke-width="1.200" d="M1223 90H1283.500"/><text x="1289" y="95" font-size="13" fill="#111">ByLayer</text>
<rect x="1384" y="79" width="124.500" height="22" fill="#fff"/><path stroke="#000" stroke-width="1.200" d="M1389 89H1424"/><text x="1429" y="95" font-size="13" fill="#111">ByLayer</text>
<rect x="1515" y="79" width="119.500" height="22" fill="#eceded"/><text x="1525" y="94" font-size="13" fill="#8a8a8a">ByColor</text>
<path fill="none" stroke="#777" stroke-width="1.200" d="M1201 88l3.500 4 3.500-4M1365 88l3.500 4 3.500-4M1497 88l3.500 4 3.500-4M1623 88l3.500 4 3.500-4"/>

<!-- toolbars row 2 -->
<g transform="translate(23,116.500)"><path class="f" d="M-8-5l8-2 8 2V8H-8z"/><path class="o" d="M-2 4l7-9 2 2-7 9z"/></g>
<g transform="translate(46.600,116.500)"><path class="f" d="M-8-5l8-2 8 2V8H-8z"/><path stroke="#3c3" stroke-width="2" fill="none" d="M-3-6l3 3 6-7"/></g>
<g transform="translate(70,116.500)"><path class="f" d="M-8-1l8-6 8 2-8 6zM-8 3l8-6 8 2-8 6z"/><rect x="1" y="0" width="7" height="9" fill="#e66"/></g>
<g class="b">
<path d="M93 111V122M109 111V122M93 116.500H109"/><path d="M118 110l14 14"/><path d="M143 125c0-10 4-14 14-14"/><path d="M165 110v16M178 110v14H165M165 124l14-14"/>
</g>
<g class="s"><path d="M193 125c2-8 6-12 11-14l6 14"/><path d="M216 125c2-8 6-12 11-14l-4 8 8 5"/><circle cx="247" cy="116.500" r="8"/><path d="M242 111l10 11"/><path d="M262 125h16l-6-14zM266 125l6-9"/></g>
<g class="s"><path d="M292 109V125M308 109V125"/></g><path class="o" d="M302 110l-6 8h3l-2 7 7-9h-3z"/>
<g class="b"><path d="M315 110V124M331 110V124M315 117H331M338 110V124M346 110V124M354 110V124M338 117H354"/></g>
<path class="o" d="M365 110h6v14h-6z"/><path stroke="#ddd" stroke-width="1.500" d="M361 110h14M361 124h14"/>
<path class="s" d="M391 109V125"/><path class="b" d="M382 117H402M387 125h8"/>
<g class="s"><rect x="412" y="110" width="16" height="13"/></g><text x="420" y="121" font-size="9" fill="#ddd" text-anchor="middle">⌖.1</text>
<circle cx="442.500" cy="116.500" r="8" class="s"/><path class="b" d="M438 116.500h9M442.500 112v9"/>
<path class="s" d="M458 110V124M474 110V124M458 111H474"/><path stroke="#3c3" stroke-width="2" fill="none" d="M461 118l3 4 6-8"/>
<path class="s" d="M482 117l4-5 4 12 4-7 4 2"/>
<g transform="translate(519,116.500)"><path class="s" d="M-8-3V9M8-3V9M-8 3H8"/><path fill="#e66" d="M-2-2l6-7 2 2-6 7z"/></g>
<text x="541.600" y="120" font-size="14" fill="#ddd" text-anchor="middle">A</text><path class="s" d="M533 112v14M550 112v14M533 124h17"/>
<path class="s" d="M556 109v16M572 109v16M556 110h16"/><circle cx="564" cy="118" r="4" fill="none" stroke="#3c3" stroke-width="1.500"/>
<rect x="582" y="106" width="120" height="22" fill="#fff"/><text x="601" y="122" font-size="13" fill="#111">Standard</text>
<path fill="none" stroke="#888" stroke-width="1.200" d="M691 115l3.500 4 3.500-4"/>
<path class="s" d="M708 115v11M722 115v11M708 122h14"/><path class="o" d="M712 118l7-8 2 2-7 8z"/>
<!-- solid-edit icons -->
<g class="fb"><path d="M741 112l7-3 7 3-3 13-8 2-5-3z"/><path d="M763 116l5-5h9v12l-5 3h-9z"/></g>
<path class="f" d="M768 111h9l-2 4-7 1z"/>
<path class="f" d="M786 111h9v12h-9z"/><path class="fb" d="M784 116h6v10h-6z"/>
<g transform="translate(820,116.500)"><path class="fb" d="M-5-8h6V9h-6z"/><path class="f" d="M3-6l3 2V8l-3 1z"/></g>
<g transform="translate(823,116.500)"><path stroke="#fff" stroke-width="1.200" d="M4 0h6M8-2l2 2-2 2"/></g>
<g transform="translate(844,116.500)"><path stroke="#ddd" stroke-width="1.500" d="M-7-8v8M-11-4h8"/><rect x="-2" y="-1" width="10" height="10" class="fb"/></g>
<g transform="translate(866,116.500)"><path class="f" d="M-6-8H7V8H-6z"/><rect x="-4" y="-6" width="9" height="12" fill="#8a9099"/></g>
<g transform="translate(889,116.500)"><path class="fb" d="M-7-2L-2 8H-8z"/><path class="f" d="M-3-8l7 6-3 10-4-1z"/><path stroke="#e33" stroke-width="2.200" d="M0-9l7 7M7-9l-7 7"/></g>
<g transform="translate(913,116.500)"><circle cx="-6" cy="-5" r="3" class="s"/><rect x="-2" y="-1" width="10" height="10" class="fb"/></g>
<g transform="translate(936,116.500)"><path class="f" d="M-8 8L-3-8h3L-6 8z"/><path class="fb" d="M-2 8L3-6h3L2 8z"/><path class="f" d="M4 8L6-3l2 2-1 9z"/></g>
<g transform="translate(959,116.500)"><path class="f" d="M-2-9H8V2H-2z"/><path class="fb" d="M-8-3H2V9H-8z"/></g>
<g transform="translate(982,116.500)"><rect x="-8" y="-9" width="7" height="7" fill="#e66"/><rect x="-1" y="-9" width="7" height="7" class="fb"/><rect x="-3" y="-2" width="11" height="11" class="fb"/><rect x="-8" y="-2" width="5" height="5" class="f"/></g>
<g transform="translate(1011,116.500)"><path class="f" d="M-6-9c8 0 13 6 13 13V9H-6z"/></g>
<g transform="translate(1034,116.500)"><path class="f" d="M-8 9V3L4-9l4 3V9z"/><path class="fb" d="M-6 1L3-8l3 3-9 8z"/></g>
<g transform="translate(1056,116.500)"><path class="f" d="M-3-6H8V9H-3z"/><path class="fb" d="M-7-2h4V9h-4z"/></g>
<g transform="translate(1080,116.500)"><rect x="-8" y="-9" width="7" height="7" fill="#e66"/><rect x="-1" y="-9" width="7" height="7" class="fb"/><rect x="-5" y="-1" width="13" height="3" fill="#fff"/><rect x="-3" y="3" width="11" height="6" class="fb"/></g>
<g transform="translate(1110,116.500)"><path stroke="#5c5" stroke-width="2.200" d="M-8-6h6M-5-9v6"/><rect x="-3" y="-2" width="11" height="11" fill="#bcd" stroke="#fff"/><rect x="0" y="1" width="5" height="5" fill="#39a"/></g>
<g transform="translate(1132.600,116.500)"><path class="f" d="M-3-9H5V4H-3z"/><path class="o" d="M-6 9l3-6h4l1 6z"/></g>
<g transform="translate(1155,116.500)"><path class="f" d="M-7-6h4V8h-4z"/><path class="fb" d="M-1-9H7V9H-1z"/></g>
<g transform="translate(1178,116.500)"><path class="f" d="M-8-6H6V9H-8z"/><rect x="-5" y="-2" width="6" height="8" class="fb"/></g>
<g transform="translate(1202,116.500)"><path class="f" d="M-4-9H7V4H-4z"/><path stroke="#3c3" stroke-width="2" fill="none" d="M-7 5l3 4 5-7"/></g>

<!-- left toolbar -->
<rect x="5" y="133" width="24" height="449" fill="#3b4452" stroke="#1e252e"/>
<path stroke="#bbb" stroke-dasharray="1 1" stroke-width="3" d="M8 137.500H21"/>
<g transform="translate(16,0)">
<path class="s" d="M-7 160L7 146"/><path class="fb" d="M5 144h3v3H5zM-8 158h3v3h-3z"/>
<path class="s" d="M-6 181L6 169"/><path class="f" d="M-8 183v-6l6 6zM8 167v6l-6-6z"/><path class="fb" d="M-1 174h2v2h-2z"/>
<path class="s" d="M-8 201h9M2 191c6 2 6 9 0 10"/><path class="fb" d="M-8 199h3v3h-3zM2 199h2v3H2zM-1 190h3v3h-3z"/>
<path class="s" d="M0 212l7 6-3 8H-4l-3-8z"/><path class="fb" d="M-1 218h2v2h-2zM4 224h2v2H4z"/>
<path class="s" d="M-7 236H7V246H-7z"/><path class="fb" d="M-8 235h2v2h-2zM6 245h2v2H6z"/>
<path class="s" d="M-6 270c1-8 6-13 13-14"/><path class="fb" d="M-6 268h2v3h-2zM4 255h3v2H4z"/>
<circle cy="285" r="8" class="s"/><path class="fb" d="M0 285l4-5h2v2l-5 4zM3 279h3v3H3z"/>
<path class="s" d="M-7 302c3-3 6-1 8-1 3-1 6 1 6 4 1 3-2 6-5 5-2 2-6 2-7 0-3 0-4-5-2-8z"/>
<path class="s" d="M-7 335c1-6 3-8 5-8M2 325l3 4M8 322c0 4-1 7-1 9"/><path class="fb" d="M-7 333h2v2h-2zM-3 325h2v2h-2zM3 329h2v2H3zM6 321h2v2H6z"/>
<ellipse cy="351" rx="7" ry="5" class="s"/><path class="fb" d="M-8 350h2v2h-2zM6 350h2v2H6zM-1 345h2v2h-2z"/>
<path class="s" d="M-7 372c0-5 6-6 9-3M-6 376c1 2 4 2 6 1"/><path class="fb" d="M2 371h2v2H2zM6 371h2v2H6z"/>
<path class="fb" d="M-1 387H5v6H8v10H-1z"/><path class="f" d="M-8 393H3v6H-8z" fill-opacity=".9"/><circle cx="2" cy="400" r="4" fill="#aaa" stroke="#ddd"/>
<path class="s" d="M-6 411H2V420H-6z"/><path class="o" d="M4 408l1.500 3 3-1-1.500 3 2 2-3 .5-1.500 3-1.500-3-3-.5 2-2-1.500-3 3 1z"/><circle cx="2" cy="421" r="3.500" fill="#aaa" stroke="#ddd"/>
<path class="f" d="M-1 432h2v2h-2zM-7 438h2v2h-2zM5 438h2v2H5zM-1 444h2v2h-2z"/>
<rect x="-5" y="454" width="11" height="13" class="fb" fill-opacity=".7"/><path class="s" d="M-7 455H8M-7 467H8M-5 452V470M6 452V470"/>
<rect x="-5" y="477" width="11" height="12" fill="#6cbcf5"/><path class="s" d="M-7 477H8M-7 489H8M-5 475V492M6 475V492"/>
<path class="f" d="M-8 498H4l4 5V511H-8z"/><circle cy="504" r="2.500" fill="#3b4452"/>
<path class="s" d="M-8 520H8V533H-8zM-8 524.500H8M-8 529H8M-3 520V533M3 520V533"/>
<text y="556" font-size="20" font-weight="bold" fill="#ddd" text-anchor="middle">A</text>
<circle cx="-4" cy="566" r="3.500" fill="#5fd08b"/><circle cx="5" cy="576" r="3.500" class="fb"/><path class="s" d="M0 566h4v4"/>
</g>

<!-- right toolbar -->
<rect x="1613" y="133" width="24.500" height="404" fill="#3b4452" stroke="#1e252e"/>
<path stroke="#bbb" stroke-dasharray="1 1" stroke-width="3" d="M1617 137H1631"/>
<g transform="translate(1625,0)">
<path fill="#f4cf7a" d="M-3 154L6 144l2 2-8 11z"/><path fill="#e66" d="M-5 156l2-2 3 3-3 3z"/><path class="b" d="M-8 160H8"/>
<circle cx="-4" cy="170" r="2.500" class="s"/><path class="s" d="M0 170h6v3"/><circle cx="1" cy="179" r="3" class="b"/><circle cx="6" cy="179" r="3" class="b"/>
<path class="s" d="M-2 191v14h-6zM2 191v14h6z"/>
<path class="b" d="M8 213H-3c-6 0-6 12 0 12H8M8 216H-2c-3 0-3 6 0 6H8"/>
<path class="s" d="M-7 234h5v5h-5zM-7 243h5v5h-5z"/><path class="b" d="M2 234h5v5H2zM2 243h5v5H2z"/><path class="f" d="M5 246h3v3H5z"/>
<path class="f" d="M0 254l3 3H1v4h4v-2l3 3-3 3v-2H1v4h2l-3 3-3-3h2v-4h-4v2l-3-3 3-3v2h4v-4h-2z"/>
<path class="s" d="M6 281a7 7 0 1 1-5-3"/><path class="f" d="M1 275l4 3-4 3z"/>
<path class="b" d="M-8 300H8V315H3"/><path class="s" d="M-8 307H1V315H-8z"/>
<path class="s" d="M-8 322H-1V337H-8zM-4 332h5"/><path class="b" d="M1 322h3l4 15H3"/>
<path class="b" d="M-8 344H8" stroke-dasharray="2 1"/><path class="f" d="M-3 346l6 6-1 1-6-6zM3 346l-6 6 1 1 6-6z"/><circle cx="0" cy="357" r="3" class="s"/><circle cx="5" cy="357" r="2.500" class="s"/>
<path class="s" d="M7 366V380"/><path class="b" d="M-8 376H0" stroke-dasharray="2 1"/><path class="f" d="M-8 370H0v-2l4 3-4 3v-2h-8z"/>
<path class="s" d="M-8 390H8V401H-8z"/><path class="b" d="M3 386v6"/>
<path class="s" d="M-8 412H8V423H-8z"/><path class="b" d="M-3 409v6M3 409v6"/>
<path class="s" d="M-8 439H8"/><path class="fb" d="M-5 436l5 3-5 3zM5 436l-5 3 5 3z"/>
<path class="b" d="M-6 462L0 454"/><path class="s" d="M2 453H8M-7 463v5"/>
<path class="b" d="M-7 483c0-5 2-7 7-8"/><path class="s" d="M2 475H8M-7 485v5"/>
<path class="b" d="M-7 504c3-9 6-3 9 0 2 2 5 0 6-4"/><path class="s" d="M-7 506v3M8 497v-4"/>
<path class="b" d="M-8 517H4V531H-8zM-8 517l4-4H8V527l-4 4"/><path class="s" d="M-6 520H2V529H-6zM-2 520V529M-6 524H2"/>
</g>

<!-- command window -->
<rect x="316" y="1232" width="50" height="22" rx="2" fill="#5c5d5e" fill-opacity=".95"/>
<rect x="316" y="1259" width="129.500" height="22" rx="2" fill="#5c5d5e" fill-opacity=".95"/>
<rect x="316" y="1286" width="115.700" height="22" rx="2" fill="#5c5d5e" fill-opacity=".95"/>
<g font-size="17" fill="#e4e4e4" font-family="Liberation Mono,Noto Sans CJK SC,monospace">
<text x="318" y="1249">命令:</text><text x="318" y="1276">命令: _mtedit</text><text x="318" y="1303">命令: *取消*</text>
</g>
<rect x="254" y="1312" width="56" height="25" fill="#2b3340"/>
<rect x="310" y="1312" width="1077" height="25" rx="1" fill="#bcbdbf"/>
<path stroke="#aaa" stroke-width="2.500" stroke-dasharray="2 1.500" d="M260 1315V1333M263.500 1315V1333"/>
<path stroke="#c8c8c8" stroke-width="1.600" d="M269 1320l8 8M277 1320l-8 8"/>
<path fill="#bbb" d="M290 1337l8-10c-2-4 0-8 5-8l-2 3 2 2 3-2c0 5-4 7-8 6l-6 10z"/>
<rect x="315" y="1319" width="15" height="13" fill="#e3e3e3" stroke="#333"/><path fill="#333" d="M316 1319h14v3h-14z"/><path fill="none" stroke="#333" d="M318 1325l2 2-2 2M322 1329h4"/><path fill="#555" d="M333 1323h8l-4 4z"/>
<text x="348" y="1330" font-size="17.500" font-style="italic" fill="#777">键入命令</text>
<text x="420" y="1334" font-size="11" fill="#a8f5a8">蓄水管</text><path stroke="#5cc05c" d="M418 1336.500H452"/>
<text x="696" y="1334" font-size="11" fill="#a8f5a8">水槽</text><path stroke="#5cc05c" d="M692 1336.500H722"/>
<path fill="#555" d="M1376 1332l4-5 4 5z"/>

<!-- layout tabs -->
<path fill="#3b4452" d="M16 1338h48l-5 16c-1 2-2 2-4 2H24c-2 0-3 0-4-2z"/>
<path fill="#2d3542" d="M66 1338h64l-5 16c-1 2-2 2-4 2H72c-2 0-3 0-4-2z"/><path fill="#2d3542" d="M140 1338h17l-3 14c-1 3-2 4-4 4h-14z"/>
<text x="27" y="1352" font-size="12" fill="#f0f0f0" font-weight="bold">模型</text>
<text x="74" y="1352" font-size="12.500" fill="#bfc5cf">Layout1</text>
<path stroke="#aab" stroke-width="2" d="M141 1347h9M145.500 1342.500v9"/>

<!-- status bar -->
<g class="g"><rect x="1038" y="1340" width="30" height="24"/><rect x="1071" y="1340" width="64" height="24"/><rect x="1139" y="1340" width="103" height="24"/><rect x="1243" y="1340" width="64" height="24"/><rect x="1308.500" y="1340" width="23.500" height="24"/><rect x="1335.600" y="1340" width="105.400" height="24"/><rect x="1444" y="1340" width="40" height="24"/><rect x="1485" y="1340" width="24" height="24"/><rect x="1512" y="1340" width="24" height="24"/><rect x="1539" y="1340" width="49" height="24"/><rect x="1591" y="1340" width="50" height="24"/></g>
<rect x="1139" y="1341" width="22" height="22" fill="#5f8fc4"/><rect x="1268" y="1341" width="22" height="22" fill="#5f8fc4"/><rect x="1336" y="1341" width="22" height="22" fill="#5f8fc4"/>
<text x="1041" y="1357" font-size="12" fill="#e8e8e8">模型</text>
<path class="s" d="M1075 1345h16M1075 1350h16M1075 1355h16M1078 1342v17M1083 1342v17M1088 1342v17"/>
<path stroke="#d8d8d8" stroke-width="2" stroke-dasharray="2 4.500" d="M1101 1345h14M1101 1351h14M1101 1357h14"/>
<path fill="#ddd" d="M1123 1349h8l-4 5z M1190 1349h8l-4 5zM1230 1349h8l-4 5zM1295 1349h8l-4 5zM1429 1349h8l-4 5zM1472 1349h8l-4 5z"/>
<path fill="none" stroke="#fff" stroke-width="1.800" d="M1143 1343V1359H1158M1143 1354h5v5"/>
<circle cx="1174" cy="1353" r="6.500" class="s"/><path class="s" d="M1174 1353l8-9"/>
<path stroke="#e66" d="M1206 1345l13 14"/><path stroke="#5c5" d="M1213 1341v7M1213 1354v7"/><rect x="1211" y="1350" width="3" height="3" fill="#ddd"/>
<path class="s" d="M1247 1359H1263M1247 1359l12-12"/>
<path fill="none" stroke="#fff" stroke-width="1.600" d="M1272 1345H1286V1359H1272z"/><rect x="1270.500" y="1343" width="4" height="4" fill="#5f8fc4" stroke="#fff"/>
<path stroke="#d8d8d8" stroke-width="2.200" d="M1312 1345H1328M1312 1350H1324"/><path stroke="#d8d8d8" stroke-width="3.500" d="M1312 1357H1322"/>
<path d="M1346 1342l7 17h-4l-3-7-3 7h-4z" fill="#fff"/><circle cx="1354" cy="1346" r="2" class="s"/>
<path class="f" d="M1371 1344l6 15h-3l-3-7-3 7h-3z"/><path class="f" d="M1376 1342l2 4-2 2-1-3zM1366 1342l2 3-1 2-2-3z"/>
<path class="f" d="M1395 1343l6 16h-3l-3-6-3 6h-3z"/>
<text x="1411" y="1356" font-size="12.500" fill="#ddd">1:1</text>
<circle cx="1455" cy="1352" r="4.500" fill="none" stroke="#d8d8d8" stroke-width="3.500"/><path stroke="#d8d8d8" stroke-width="2.500" d="M1455 1344v3M1455 1357v3M1447 1352h3M1460 1352h3M1449.500 1346.500l2 2M1458.500 1355.500l2 2M1449.500 1357.500l2-2M1458.500 1348.500l2-2"/>
<path stroke="#d8d8d8" stroke-width="2.200" d="M1489 1352H1505M1497 1344V1360"/>
<path class="s" stroke-width="1.200" d="M1517 1344h7v7h-7z"/><circle cx="1531" cy="1349" r="3.500" class="s"/><path class="s" d="M1524 1353l-4 7h8z"/>
<rect x="1542" y="1343" width="13" height="13" fill="#3e70b5"/><rect x="1542" y="1352" width="7" height="7" class="o"/><path stroke="#5c5" stroke-width="2.200" fill="none" d="M1549 1355l3 4 6-6"/><path stroke="#fff" d="M1549 1343v7M1545 1347h8"/>
<rect x="1565" y="1343" width="15" height="17" fill="#aeb2b8"/><path fill="none" stroke="#555" d="M1566 1352l4-5 4 5 5-3"/><path fill="#f0a050" d="M1576 1350l5 9h-10z"/>
<path class="s" d="M1595 1345H1611V1359H1595z"/><path fill="none" stroke="#d8d8d8" d="M1599 1355l3-3M1607 1348l-3 3"/>
<path stroke="#d8d8d8" stroke-width="2.400" d="M1619 1345H1635M1619 1352H1635M1619 1359H1635"/>
</svg>
</body></html>
